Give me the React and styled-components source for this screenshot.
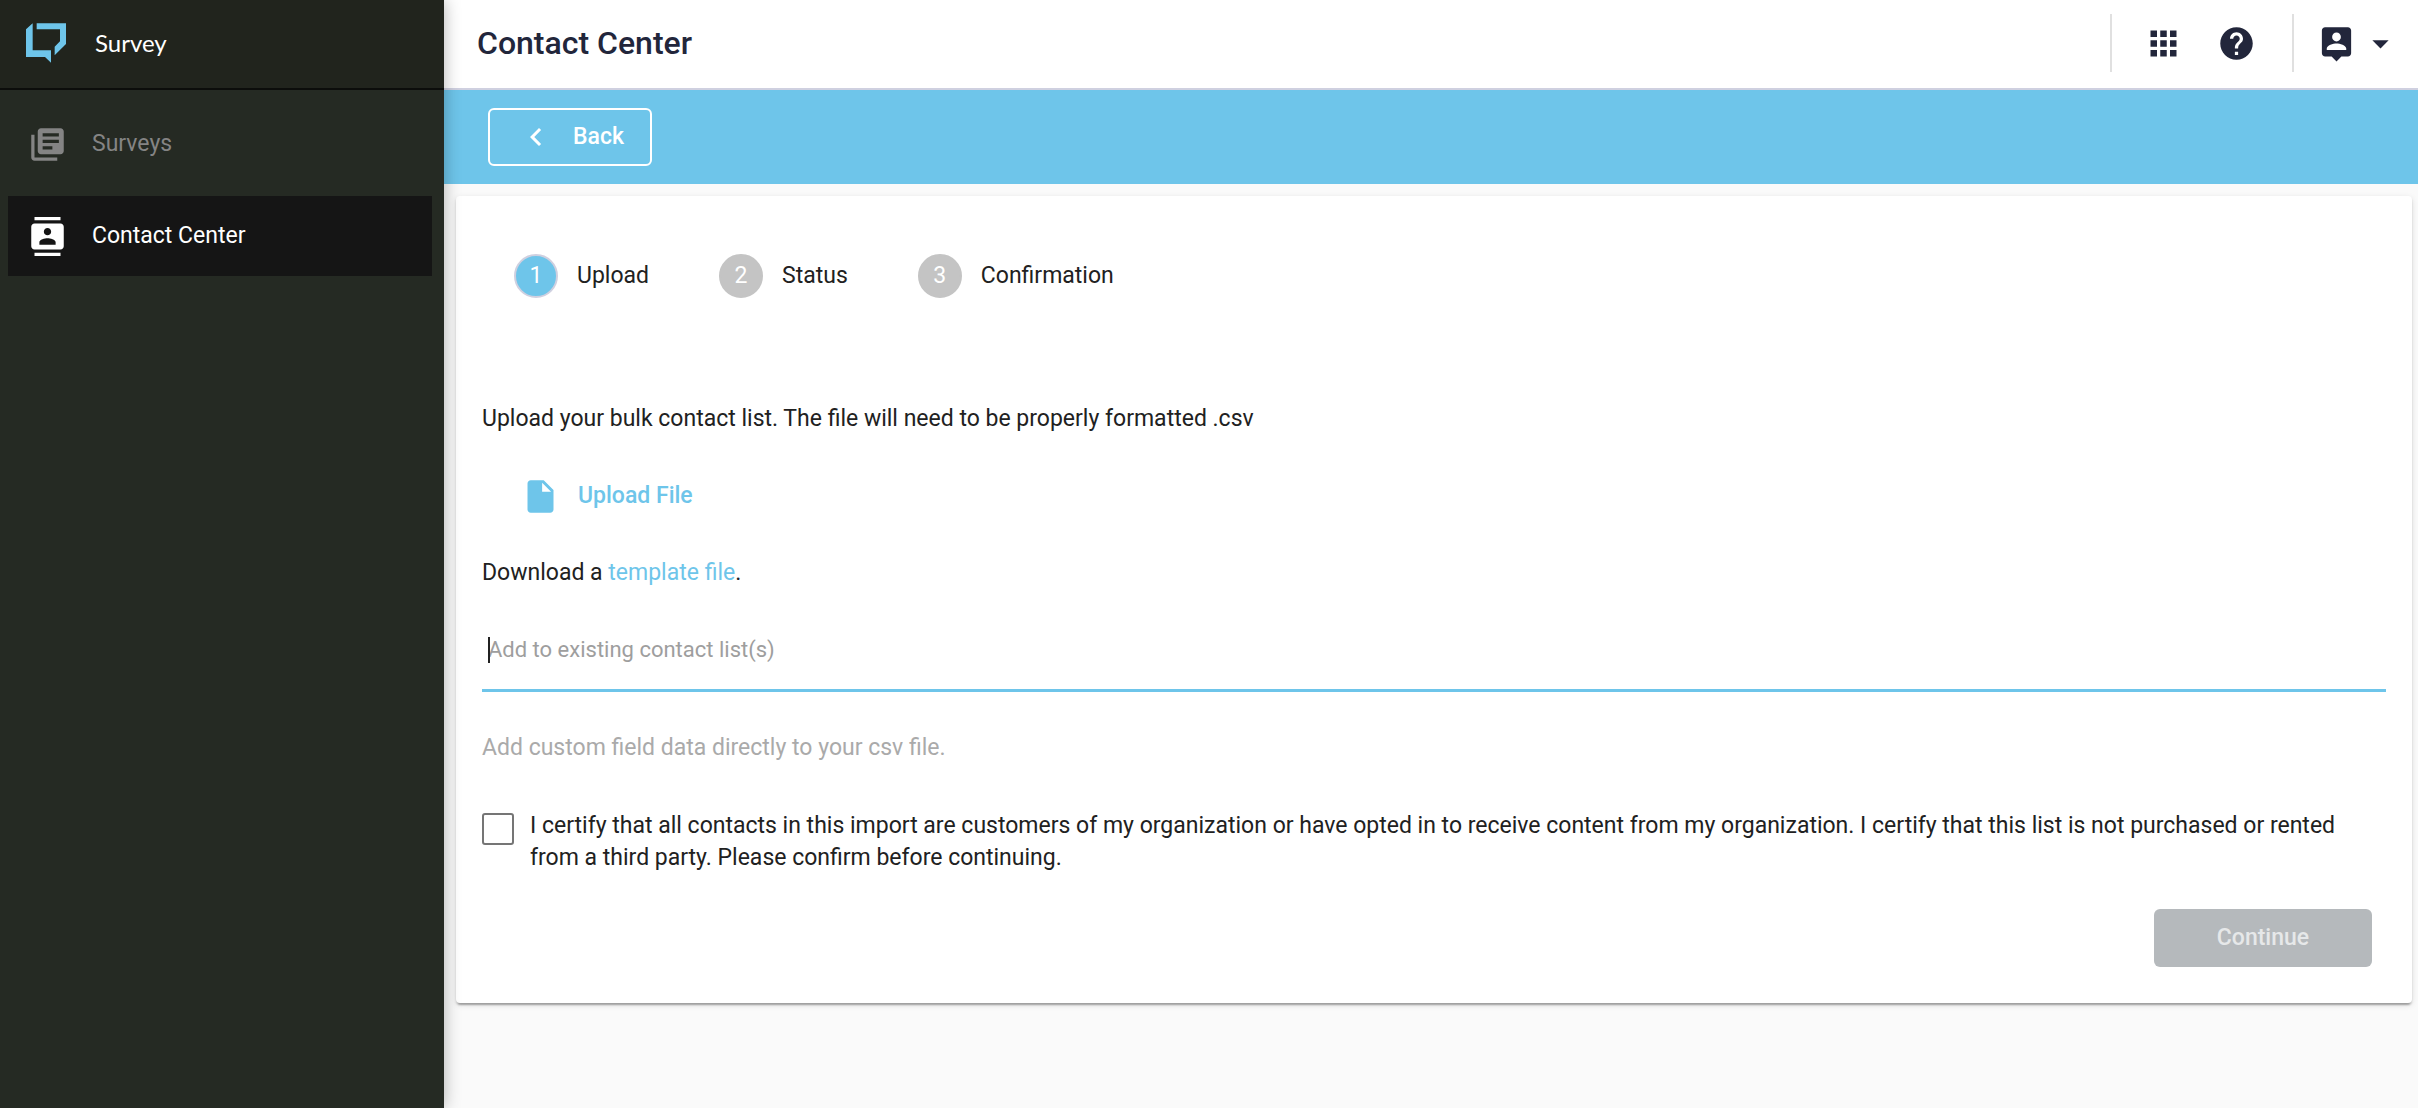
import React, { useState } from "react";
import styled, { createGlobalStyle } from "styled-components";
import {
  MdLibraryBooks,
  MdContacts,
  MdApps,
  MdHelp,
  MdArrowDropDown,
  MdChevronLeft,
  MdInsertDriveFile,
} from "react-icons/md";

const color = {
  brand: "#6ec5ea",
  ink: "#212121",
  navy: "#22263b",
  page: "#fafafa",
  mute: "#9e9e9e",
};

const GlobalStyle = createGlobalStyle`
  *, *::before, *::after { box-sizing: border-box; }
  body {
    margin: 0;
    background: ${color.page};
    color: ${color.ink};
    font-family: Roboto, "Liberation Sans", sans-serif;
    font-size: 23px;
    line-height: 32px;
  }
  button, input { font: inherit; color: inherit; }
  svg { display: block; flex: none; }
`;

const Shell = styled.div`
  display: flex;
  min-height: 100vh;
`;

const Sidebar = styled.aside`
  position: relative;
  z-index: 1;
  flex: none;
  width: 444px;
  background: #252a23;
  box-shadow: 0 0 16px rgba(0, 0, 0, 0.3);
`;

const Brand = styled.div`
  display: flex;
  align-items: center;
  gap: 29px;
  height: 90px;
  padding: 0 26px 2px;
  border-bottom: 2px solid #0c0d0b;
  background: #21241d;
  color: #fff;
  font-family: Lato, "Open Sans", sans-serif;
  font-size: 24px;
`;

const Nav = styled.nav`
  display: flex;
  flex-direction: column;
  gap: 12px;
  padding: 14px 12px 0 8px;
`;

const NavLink = styled.a`
  display: flex;
  align-items: center;
  gap: 25px;
  height: 80px;
  padding: 0 20px;
  background: ${(p) => (p.$active ? "#151515" : "transparent")};
  color: ${(p) => (p.$active ? "#fff" : "#848484")};
  text-decoration: none;
`;

const Main = styled.div`
  flex: 1;
  min-width: 0;
`;

const TopBar = styled.header`
  display: flex;
  align-items: center;
  height: 90px;
  padding: 0 0 2px 33px;
  border-bottom: 2px solid #cfd0e0;
  background: #fff;
  color: ${color.navy};
`;

const Title = styled.h1`
  flex: 1;
  margin: 0;
  font-size: 32px;
  font-weight: 500;
  line-height: 40px;
`;

const ToolGroup = styled.div`
  display: flex;
  align-items: center;
  gap: ${(p) => p.$gap}px;
  height: 58px;
  padding: 0 ${(p) => p.$right}px 0 ${(p) => p.$left}px;
  border-left: 2px solid #e0e0e0;
`;

const IconButton = styled.button`
  display: flex;
  align-items: center;
  gap: 5px;
  padding: 0;
  border: 0;
  background: none;
  cursor: pointer;
`;

const ActionBar = styled.div`
  display: flex;
  align-items: center;
  height: 94px;
  padding: 0 44px;
  background: ${color.brand};
`;

const BackButton = styled.button`
  display: flex;
  align-items: center;
  gap: 19px;
  height: 58px;
  padding: 0 26px 0 28px;
  border: 2px solid #fff;
  border-radius: 6px;
  background: transparent;
  color: #fff;
  font-weight: 500;
  cursor: pointer;
`;

const Card = styled.main`
  display: flex;
  flex-direction: column;
  margin: 12px 6px 12px 12px;
  padding: 58px 26px 36px;
  border-radius: 4px;
  background: #fff;
  box-shadow: 0 4px 2px -2px rgba(0, 0, 0, 0.2),
    0 2px 2px rgba(0, 0, 0, 0.14), 0 2px 6px rgba(0, 0, 0, 0.12);
`;

const Steps = styled.ol`
  display: flex;
  gap: 70px;
  margin: 0 0 105px;
  padding: 0 32px;
  list-style: none;
`;

const Step = styled.li`
  display: flex;
  align-items: center;
  gap: 19px;
  height: 44px;
`;

const StepNumber = styled.span`
  display: grid;
  place-items: center;
  width: 44px;
  height: 44px;
  border: 2px solid ${(p) => (p.$active ? "#cfd0e0" : "#c4c4c4")};
  border-radius: 50%;
  background: ${(p) => (p.$active ? color.brand : "#c4c4c4")};
  color: #fff;
`;

const Text = styled.p`
  margin: 0;
`;

const UploadButton = styled.button`
  display: flex;
  align-items: center;
  align-self: flex-start;
  gap: 18px;
  height: 58px;
  margin: 32px 0;
  padding: 0 39px;
  border: 0;
  background: none;
  color: ${color.brand};
  font-weight: 500;
  cursor: pointer;
`;

const TemplateLink = styled.a`
  color: ${color.brand};
  text-decoration: none;
`;

const Field = styled.label`
  position: relative;
  display: block;
  margin-top: 32px;
`;

const FieldInput = styled.input`
  display: block;
  width: 100%;
  height: 71px;
  padding: 0 6px 12px;
  border: 0;
  border-bottom: 3px solid ${color.brand};
  outline: 0;
  background: none;
  font-size: 22px;
  caret-color: transparent;

  &::placeholder {
    color: ${color.mute};
    opacity: 1;
  }
`;

const Caret = styled.span`
  position: absolute;
  top: 16px;
  left: 6px;
  width: 2px;
  height: 26px;
  background: ${color.ink};
`;

const Hint = styled.p`
  margin: 40px 0 46px;
  color: #aaa;
`;

const Certify = styled.label`
  display: flex;
  align-items: flex-start;
  gap: 16px;
  padding-right: 20px;
`;

const Checkbox = styled.input`
  flex: none;
  width: 32px;
  height: 32px;
  margin: 3px 0 0;
  border: 2px solid #757575;
  border-radius: 3px;
  background: #fff;
  appearance: none;

  &:checked {
    background: ${color.brand};
  }
`;

const ContinueButton = styled.button`
  align-self: flex-end;
  width: 218px;
  height: 58px;
  margin: 35px 14px 0;
  border: 0;
  border-radius: 6px;
  background: #b5b9bc;
  color: #e6e8e9;
  font-weight: 500;
`;

const ICON = 39;

const Logo = () => (
  <svg width="40" height="40" viewBox="78 69 120 120" fill={color.brand} aria-hidden="true">
    <path d="M98 70V151H153V188L135 171H78V88Z" />
    <path d="M110 70H198V132L164 166V140L180 124V88H110Z" />
  </svg>
);

const PersonBadge = () => (
  <svg width={ICON} height={ICON} viewBox="0 0 24 24" fill="currentColor" aria-hidden="true">
    <path d="M19 2H5c-1.11 0-2 .9-2 2v14c0 1.1.89 2 2 2h4l3 3 3-3h4c1.1 0 2-.9 2-2V4c0-1.1-.9-2-2-2zm-7 3.3c1.49 0 2.7 1.21 2.7 2.7 0 1.49-1.21 2.7-2.7 2.7-1.49 0-2.7-1.21-2.7-2.7 0-1.49 1.21-2.7 2.7-2.7zM18 16H6v-.9c0-2 4-3.1 6-3.1s6 1.1 6 3.1v.9z" />
  </svg>
);

const steps = ["Upload", "Status", "Confirmation"];

export default function App() {
  const [list, setList] = useState("");

  return (
    <>
      <GlobalStyle />
      <Shell>
        <Sidebar>
          <Brand>
            <Logo />
            <span>Survey</span>
          </Brand>
          <Nav>
            <NavLink href="#surveys">
              <MdLibraryBooks size={ICON} />
              Surveys
            </NavLink>
            <NavLink href="#contacts" $active aria-current="page">
              <MdContacts size={ICON} />
              Contact Center
            </NavLink>
          </Nav>
        </Sidebar>
        <Main>
          <TopBar>
            <Title>Contact Center</Title>
            <ToolGroup $gap={34} $left={32} $right={36}>
              <IconButton aria-label="Apps">
                <MdApps size={ICON} />
              </IconButton>
              <IconButton aria-label="Help">
                <MdHelp size={ICON} />
              </IconButton>
            </ToolGroup>
            <ToolGroup $gap={0} $left={23} $right={18}>
              <IconButton aria-label="Account">
                <PersonBadge />
                <MdArrowDropDown size={ICON} />
              </IconButton>
            </ToolGroup>
          </TopBar>
          <ActionBar>
            <BackButton>
              <MdChevronLeft size={36} />
              Back
            </BackButton>
          </ActionBar>
          <Card>
            <Steps>
              {steps.map((name, i) => (
                <Step key={name} aria-current={i === 0 ? "step" : undefined}>
                  <StepNumber $active={i === 0}>{i + 1}</StepNumber>
                  {name}
                </Step>
              ))}
            </Steps>
            <Text>
              Upload your bulk contact list. The file will need to be properly
              formatted .csv
            </Text>
            <UploadButton>
              <MdInsertDriveFile size={ICON} />
              Upload File
            </UploadButton>
            <Text>
              Download a <TemplateLink href="#template">template file</TemplateLink>.
            </Text>
            <Field>
              <FieldInput
                type="text"
                aria-label="Add to existing contact list(s)"
                placeholder="Add to existing contact list(s)"
                value={list}
                onChange={(e) => setList(e.target.value)}
              />
              {list === "" && <Caret />}
            </Field>
            <Hint>Add custom field data directly to your csv file.</Hint>
            <Certify>
              <Checkbox type="checkbox" />
              <span>
                I certify that all contacts in this import are customers of my
                organization or have opted in to receive content from my
                organization. I certify that this list is not purchased or rented
                from a third party. Please confirm before continuing.
              </span>
            </Certify>
            <ContinueButton disabled>Continue</ContinueButton>
          </Card>
        </Main>
      </Shell>
    </>
  );
}
